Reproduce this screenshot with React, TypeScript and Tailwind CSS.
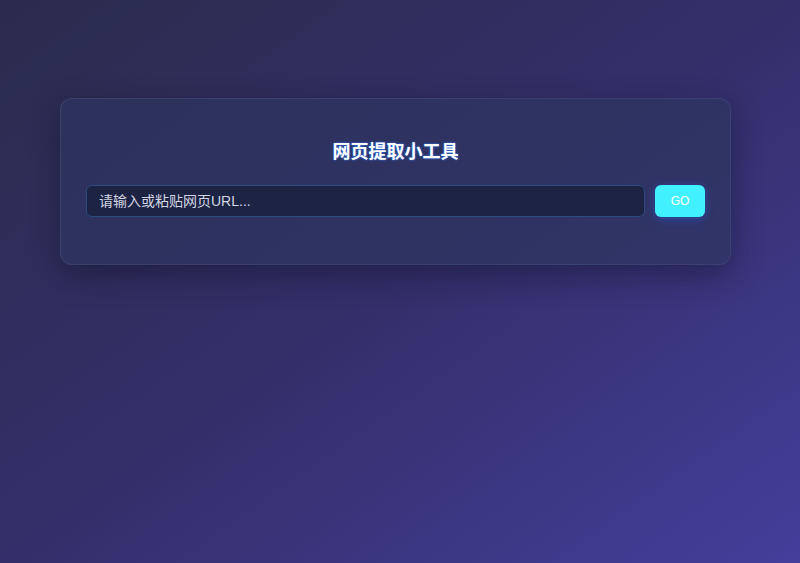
export default function App() {
  return (
    <main
      className="min-h-[563px] w-full bg-gradient-to-br from-[#2a2c4d] via-[#342f6a] to-[#433f9b] pt-[98px]"
      style={{ fontFamily: '"Liberation Sans", "Noto Sans CJK SC", sans-serif' }}
    >
      {/* Card */}
      <div className="ml-[60px] w-[671px] rounded-xl border border-[#3e4573]/80 bg-[#2d355f]/70 px-[25px] pt-[41px] pb-[47px] shadow-[0_10px_30px_rgba(15,15,40,0.45)]">
        <h1 className="mb-[21px] text-center text-[18px] font-bold leading-[24px] text-white [text-shadow:0_0_2px_#2f6bd6,0_0_2px_#2f6bd6]">
          网页提取小工具
        </h1>
        <div className="flex items-center gap-[10px]">
          <input
            type="text"
            placeholder="请输入或粘贴网页URL..."
            className="h-[32px] flex-1 rounded-md border border-[#2a4a80] bg-[#1d2343] px-3 text-[14px] text-white outline-none placeholder:text-[#d3d6e2]"
          />
          <button className="h-[32px] w-[50px] rounded-md bg-[#41f1ff] text-[12px] text-white shadow-[0_2px_8px_rgba(40,90,220,0.6)]">
            GO
          </button>
        </div>
      </div>
    </main>
  )
}
